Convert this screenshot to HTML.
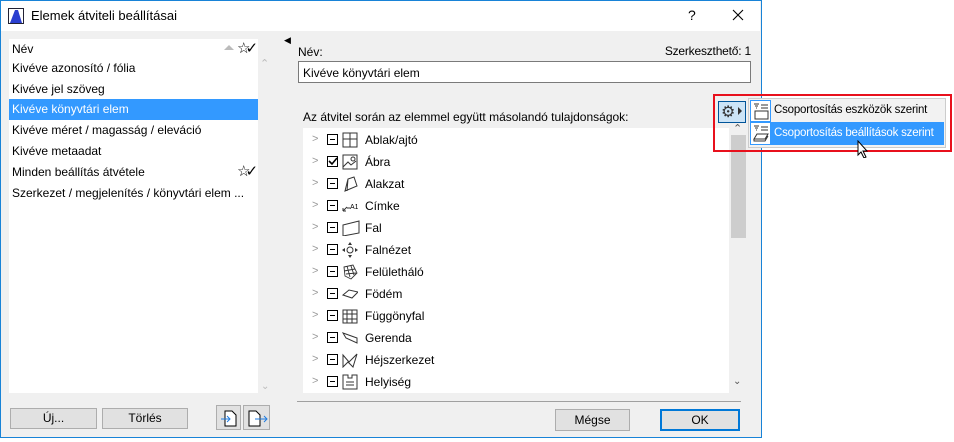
<!DOCTYPE html>
<html><head><meta charset="utf-8"><style>
*{box-sizing:border-box;margin:0;padding:0}
body{width:954px;height:442px;background:#fff;font-family:"Liberation Sans",sans-serif;font-size:12px;color:#000;position:relative;overflow:hidden}
.a{position:absolute}
.win{left:0;top:0;width:762px;height:438px;background:#f0f0f0;border:1px solid #1883d7}
.title{left:1px;top:1px;width:759px;height:30px;background:#fff}
.row{position:absolute;left:0;width:249px;height:21px;line-height:21px;padding-left:3px;white-space:nowrap}
.btn{position:absolute;background:#e1e1e1;border:1px solid #adadad;text-align:center;line-height:19px}
.tr{position:absolute;left:0;height:22px;width:420px}
.chev{position:absolute;left:9px;top:4px;color:#999;font-size:11px}
.cb{position:absolute;left:24px;top:5px;width:11px;height:11px;border:1px solid #000;background:#fff}
.cb::after{content:"";position:absolute;left:2px;top:4px;width:5px;height:1px;background:#000}
.cb.k::after{display:none}
.ic{position:absolute;left:39px;top:3px;width:16px;height:16px}
.tl{position:absolute;left:62px;top:4px}
</style></head><body>
<div class="a win"></div>
<div class="a title"></div>
<svg class="a" style="left:8px;top:8px" width="16" height="16"><rect x="0.5" y="0.5" width="15" height="15" fill="#fff" stroke="#223"/><path d="M2 15 L7 2 L10 2 L14 15 Z" fill="#2a3fd0"/></svg>
<div class="a" style="left:31px;top:8px;font-size:13px">Elemek átviteli beállításai</div>
<div class="a" style="left:688px;top:7px;font-size:14px">?</div>
<svg class="a" style="left:732px;top:9px" width="12" height="12"><path d="M1 1L11 11M11 1L1 11" stroke="#000" stroke-width="1.1"/></svg>

<!-- left list -->
<div class="a" style="left:9px;top:39px;width:249px;height:354px;background:#fff"></div>
<div class="a" style="left:9px;top:39px;width:249px;height:354px">
<div class="row" style="top:0">Név</div>
<div class="a" style="left:215px;top:6px;width:0;height:0;border-left:5px solid transparent;border-right:5px solid transparent;border-bottom:5px solid #bbb"></div>
<div class="a" style="left:228px;top:0;font-size:15px">☆<span style="margin-left:-5px">✓</span></div>
<div class="row" style="top:19px">Kivéve azonosító / fólia</div>
<div class="row" style="top:40px">Kivéve jel szöveg</div>
<div class="row" style="top:60px;background:#3399ff;color:#fff">Kivéve könyvtári elem</div>
<div class="row" style="top:81px">Kivéve méret / magasság / eleváció</div>
<div class="row" style="top:102px">Kivéve metaadat</div>
<div class="row" style="top:123px">Minden beállítás átvétele</div>
<div class="a" style="left:228px;top:123px;font-size:15px">☆<span style="margin-left:-5px">✓</span></div>
<div class="row" style="top:144px">Szerkezet / megjelenítés / könyvtári elem ...</div>
</div>
<div class="a" style="left:260px;top:57px;color:#bbb;font-size:11px">⌃</div>
<div class="a" style="left:261px;top:381px;color:#bbb;font-size:10px">⌄</div>
<div class="btn" style="left:10px;top:408px;width:87px;height:21px">Új...</div>
<div class="btn" style="left:102px;top:408px;width:86px;height:21px">Törlés</div>
<div class="btn" style="left:216px;top:405px;width:25px;height:25px"></div>
<div class="btn" style="left:243px;top:405px;width:27px;height:25px"></div>
<svg class="a" style="left:220px;top:408px" width="20" height="20"><path d="M5 3h7l4 4v11H5z" fill="#fff" stroke="#000"/><path d="M1 11h9M7 8l3 3-3 3" stroke="#1e7be0" fill="none"/></svg>
<svg class="a" style="left:246px;top:408px" width="24" height="20"><path d="M3 3h7l4 4v11H3z" fill="#fff" stroke="#000"/><path d="M9 11h12M18 8l3 3-3 3" stroke="#1e7be0" fill="none"/></svg>

<!-- splitter -->
<div class="a" style="left:284px;top:35px;color:#000;font-size:9px">◀</div>

<!-- right -->
<div class="a" style="left:298px;top:45px">Név:</div>
<div class="a" style="left:600px;top:44px;width:151px;text-align:right;letter-spacing:-0.2px">Szerkeszthető: 1</div>
<div class="a" style="left:298px;top:61px;width:453px;height:22px;background:#fff;border:1px solid #7a7a7a;padding:4px 0 0 4px">Kivéve könyvtári elem</div>
<div class="a" style="left:303px;top:110px">Az átvitel során az elemmel együtt másolandó tulajdonságok:</div>
<div class="a" style="left:303px;top:128px;width:426px;height:265px;background:#fff"></div>
<div class="a" style="left:731px;top:135px;width:15px;height:103px;background:#cdcdcd"></div>
<div class="a" style="left:733px;top:122px;font-size:11px;color:#555">⌃</div>
<div class="a" style="left:733px;top:376px;font-size:10px;color:#555">⌄</div>
<div class="a" style="left:303px;top:129px;width:426px;height:264px;overflow:hidden">
<div class="tr" style="top:0"><span class="chev">&gt;</span><i class="cb"></i><svg class="ic"><rect x="1" y="1" width="14" height="14" fill="none" stroke="#333"/><path d="M8 1v14M1 7h14" stroke="#333"/></svg><span class="tl">Ablak/ajtó</span></div>
<div class="tr" style="top:22px"><span class="chev">&gt;</span><i class="cb k"><svg width="11" height="11" style="position:absolute;left:-1px;top:-1px"><path d="M2 5l3 3 5-6" stroke="#000" stroke-width="1.6" fill="none"/></svg></i><svg class="ic"><rect x="1" y="1" width="14" height="14" fill="none" stroke="#333"/><path d="M1 13l5-5 3 3 5-4" stroke="#333" fill="none"/><circle cx="11" cy="5" r="2" fill="none" stroke="#333"/></svg><span class="tl">Ábra</span></div>
<div class="tr" style="top:44px"><span class="chev">&gt;</span><i class="cb"></i><svg class="ic"><path d="M3 15l3-12 6-2 3 9z M6 3l-1 12" fill="none" stroke="#333"/></svg><span class="tl">Alakzat</span></div>
<div class="tr" style="top:66px"><span class="chev">&gt;</span><i class="cb"></i><svg class="ic"><path d="M1 13l4-4M1 13h3M1 13v-3M5 10h3" stroke="#333" fill="none"/><text x="8" y="11" font-size="7" font-family="Liberation Sans">A1</text></svg><span class="tl">Címke</span></div>
<div class="tr" style="top:88px"><span class="chev">&gt;</span><i class="cb"></i><svg class="ic" style="width:18px"><path d="M1 5l16-4v12L1 16z" fill="none" stroke="#333"/></svg><span class="tl">Fal</span></div>
<div class="tr" style="top:110px"><span class="chev">&gt;</span><i class="cb"></i><svg class="ic"><circle cx="8" cy="8" r="3" fill="none" stroke="#333"/><path d="M8 0l-2 3h4zM8 16l-2-3h4zM0 8l3-2v4zM16 8l-3-2v4z" fill="#333"/></svg><span class="tl">Falnézet</span></div>
<div class="tr" style="top:132px"><span class="chev">&gt;</span><i class="cb"></i><svg class="ic"><path d="M2 3l9-2 4 8-6 6-6-3z M5 2l3 11M9 2l3 9M2 7l11-2M4 10l10-1" fill="none" stroke="#333" stroke-width=".9"/></svg><span class="tl">Felületháló</span></div>
<div class="tr" style="top:154px"><span class="chev">&gt;</span><i class="cb"></i><svg class="ic"><path d="M1 9l6-5 9 2-6 6z" fill="none" stroke="#333"/></svg><span class="tl">Födém</span></div>
<div class="tr" style="top:176px"><span class="chev">&gt;</span><i class="cb"></i><svg class="ic"><path d="M1 2h14v13H1zM5 2v13M10 2v13M1 6h14M1 11h14" fill="none" stroke="#333"/></svg><span class="tl">Függönyfal</span></div>
<div class="tr" style="top:198px"><span class="chev">&gt;</span><i class="cb"></i><svg class="ic"><path d="M1 3l14 5v5L4 8z" fill="none" stroke="#333"/></svg><span class="tl">Gerenda</span></div>
<div class="tr" style="top:220px"><span class="chev">&gt;</span><i class="cb"></i><svg class="ic"><path d="M1 3l6 7 8-8-4 13-5-5-5 5z" fill="none" stroke="#333"/></svg><span class="tl">Héjszerkezet</span></div>
<div class="tr" style="top:242px"><span class="chev">&gt;</span><i class="cb"></i><svg class="ic"><path d="M1 1h5v3h4V1h5v14H1z M4 8h8M4 11h8" fill="none" stroke="#333"/></svg><span class="tl">Helyiség</span></div>
</div>

<div class="a" style="left:297px;top:401px;width:444px;height:1px;background:#a0a0a0"></div>
<div class="btn" style="left:555px;top:409px;width:75px;height:22px;line-height:20px">Mégse</div>
<div class="btn" style="left:660px;top:409px;width:80px;height:22px;line-height:18px;border:2px solid #0078d7">OK</div>

<!-- gear + menu -->
<div class="a" style="left:718px;top:101px;width:28px;height:22px;background:#cce4f7;border:1px solid #005499"></div>
<div class="a" style="left:721px;top:102px;font-size:16px;color:#333">⚙</div>
<div class="a" style="left:738px;top:107px;width:0;height:0;border-top:4px solid transparent;border-bottom:4px solid transparent;border-left:4px solid #333"></div>
<div class="a" style="left:748px;top:98px;width:198px;height:50px;background:#f2f2f2;border:1px solid #ccc"></div>
<div class="a" style="left:750px;top:122px;width:194px;height:23px;background:#3399ff"></div>
<div class="a" style="left:750px;top:100px;width:21px;height:22px;background:#fff;border:1px solid #3399ff"></div>
<div class="a" style="left:750px;top:122px;width:21px;height:23px;background:#fff;border:1px solid #3399ff"></div>
<svg class="a" style="left:752px;top:102px" width="18" height="18"><path d="M2 2h5M3 4h3M4 6h1M9 3h7M9 6h7M3 9h13v8H3z" stroke="#333" fill="none"/></svg>
<svg class="a" style="left:752px;top:124px" width="18" height="18"><path d="M2 2h5M3 4h3M4 6h1M9 3h7M9 6h7M5 10h11l-3 5H2z M2 15v2h11l3-5" stroke="#333" fill="none"/></svg>
<div class="a" style="left:774px;top:104px;font-size:11.5px;letter-spacing:-0.2px;white-space:nowrap">Csoportosítás eszközök szerint</div>
<div class="a" style="left:774px;top:127px;color:#fff;font-size:11.5px;letter-spacing:-0.2px;white-space:nowrap">Csoportosítás beállítások szerint</div>
<div class="a" style="left:713px;top:94px;width:239px;height:58px;border:2px solid #e8101c"></div>
<svg class="a" style="left:857px;top:140px" width="12" height="18"><path d="M1 1v14l3-3 3 6 2-1-3-6h4z" fill="#fff" stroke="#000"/></svg>
</body></html>
